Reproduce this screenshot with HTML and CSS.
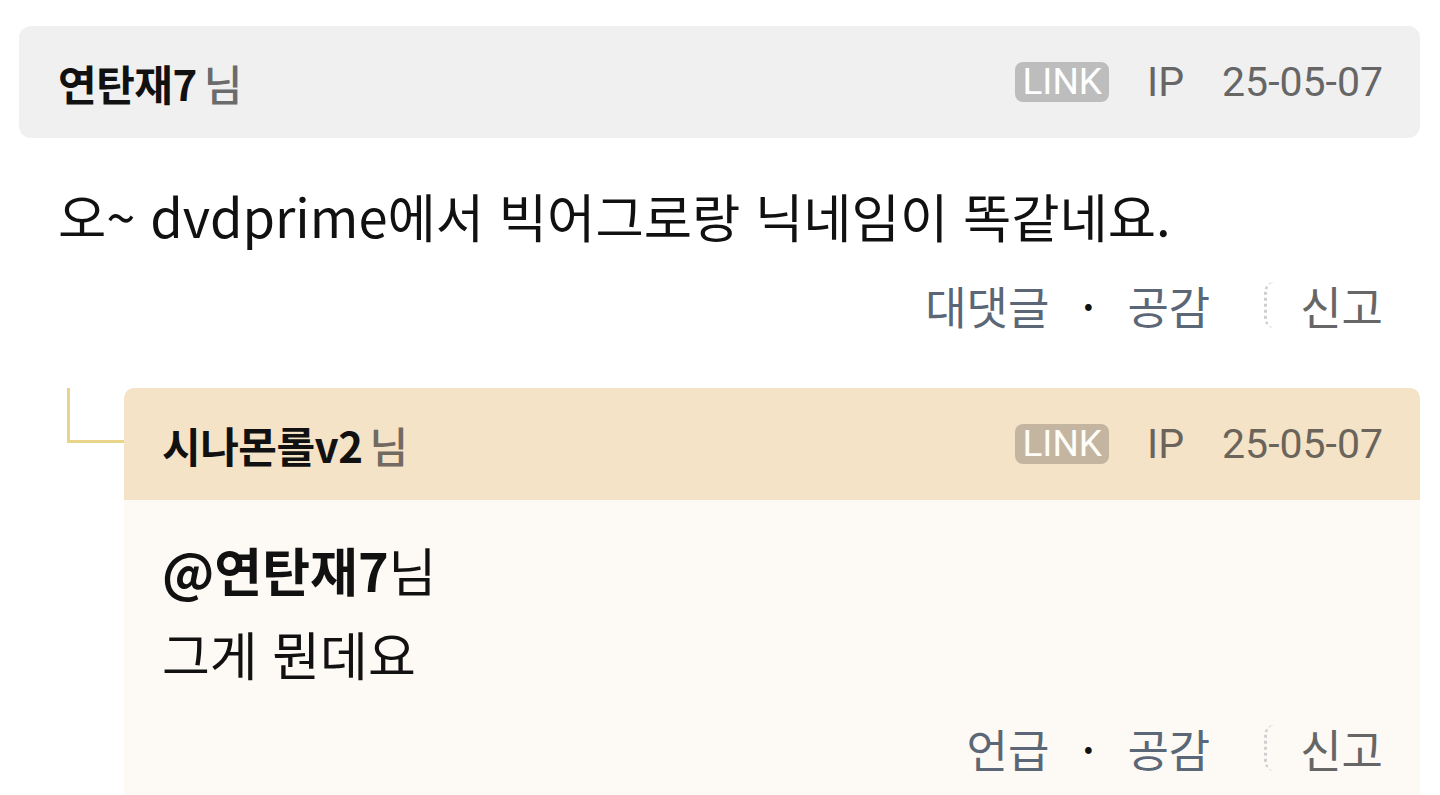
FILE: index.html
```html
<!DOCTYPE html>
<html lang="ko">
<head>
<meta charset="utf-8">
<title>댓글</title>
<link rel="stylesheet" href="styles.css">
</head>
<body>
<div class="comments">
  <div class="comment">
    <div class="comment-head">
      <div class="author"><strong class="nick">연탄재7</strong><span class="sfx">님</span></div>
      <div class="meta"><span class="badge">LINK</span><span class="ip">IP</span><span class="date">25-05-07</span></div>
    </div>
    <p class="comment-text">오~ dvdprime에서 빅어그로랑 닉네임이 똑같네요.</p>
    <div class="actions">
      <a class="act">대댓글</a><span class="dot">·</span><a class="act">공감</a><span class="sep"></span><a class="act report">신고</a>
    </div>
  </div>

  <div class="reply">
    <div class="connector"><div class="elbow"></div></div>
    <div class="reply-box">
      <div class="comment-head reply-head">
        <div class="author"><strong class="nick">시나몬롤v2</strong><span class="sfx">님</span></div>
        <div class="meta"><span class="badge">LINK</span><span class="ip">IP</span><span class="date">25-05-07</span></div>
      </div>
      <div class="reply-body">
        <p class="reply-text"><strong class="mention">@연탄재7</strong>님<br>그게 뭔데요</p>
        <div class="actions">
          <a class="act">언급</a><span class="dot">·</span><a class="act">공감</a><span class="sep"></span><a class="act report">신고</a>
        </div>
      </div>
    </div>
  </div>
</div>
</body>
</html>
```

FILE: styles.css
```css
* { box-sizing: border-box; }
html, body { margin: 0; padding: 0; background: #ffffff; }
body {
  font-family: "Noto Sans CJK KR", Roboto, sans-serif;
  color: #111111;
  overflow: hidden;
}
.comments { padding: 26px 20px 0 19px; }

.comment-head {
  display: flex;
  align-items: center;
  justify-content: space-between;
  height: 112px;
  padding: 0 37px 0 39px;
  background: #f0f0f0;
  border-radius: 12px;
}
.author { display: flex; align-items: baseline; font-size: 42px; }
.nick { font-weight: 700; color: #111; letter-spacing: -0.5px; }
.sfx { color: #6b6b6b; margin-left: 7px; font-weight: 500; }

.meta {
  display: flex;
  align-items: center;
  gap: 38px;
  font-family: Roboto, "Noto Sans CJK KR", sans-serif;
  font-size: 41px;
  color: #666666;
}
.badge {
  background: #bdbdbd;
  color: #ffffff;
  font-size: 37px;
  line-height: 40px;
  height: 40px;
  padding: 0 7px;
  border-radius: 8px;
}

.comment-text {
  margin: 0;
  padding: 47px 0 0 39px;
  font-size: 52.5px;
  line-height: 60px;
}

.actions {
  display: flex;
  align-items: center;
  justify-content: flex-end;
  height: 60px;
  padding-right: 37px;
  font-size: 45px;
  margin-top: 30px;
}
.act { color: #5b6776; }
.act.report { color: #666666; }
.dot {
  width: 78px;
  text-align: center;
  color: #111;
  font-weight: 700;
  font-size: 36px;
}
.sep {
  width: 10px;
  height: 46px;
  border-left: 3px dotted #cfcfcf;
  border-radius: 12px 0 0 12px;
  margin: 0 26px 0 54px;
}

.reply { display: flex; margin-top: 53px; }
.connector { width: 105px; flex: none; }
.elbow {
  margin-left: 48px;
  height: 55px;
  border-left: 3px solid #e8d48a;
  border-bottom: 3px solid #e8d48a;
}
.reply-box { flex: 1; border-radius: 10px 10px 0 0; overflow: hidden; }
.reply-head {
  background: #f4e3c7;
  border-radius: 0;
  padding: 0 37px 0 38px;
}
.reply-head .sfx { color: #726a61; }
.reply-head .meta { color: #6b645b; }
.reply-head .badge { background: #c4b5a1; color: #fffdf8; }

.reply-body { background: #fdfaf5; padding: 28px 0 40px 0; }
.reply-text {
  margin: 0;
  padding-left: 38px;
  font-size: 52px;
  line-height: 84px;
}
.mention { font-weight: 700; }
.reply-body .actions { margin-top: 22px; }
```
